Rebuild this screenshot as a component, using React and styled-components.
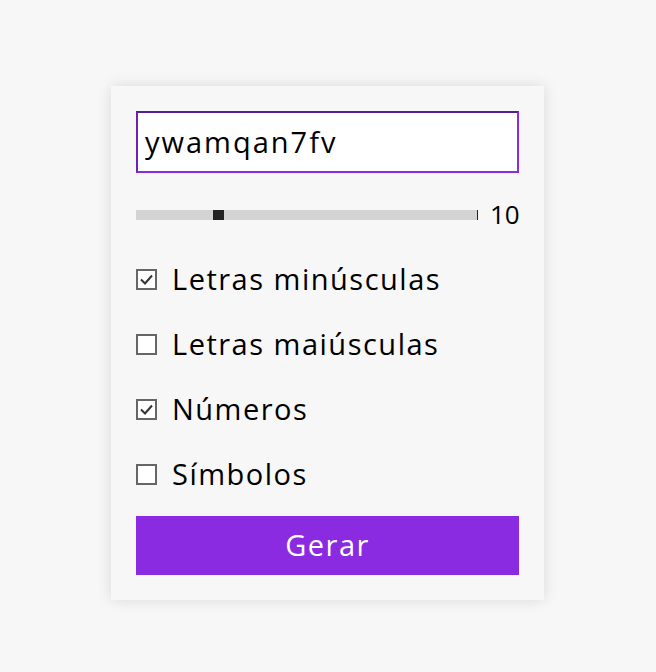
import React, { useState } from "react";
import styled, { createGlobalStyle } from "styled-components";

const Global = createGlobalStyle`
  html, body { margin: 0; padding: 0; background: #f7f7f7; }
  body { font-family: "Open Sans", "Noto Sans", sans-serif; }
  * { box-sizing: border-box; }
`;

const Page = styled.div`
  width: 656px;
  height: 672px;
  display: flex;
  padding-top: 86px;
  padding-left: 111px;
`;

const Card = styled.div`
  width: 433px;
  height: 514px;
  background: #f7f7f7;
  box-shadow: 0 0 14px rgba(0, 0, 0, 0.12);
  padding: 25px;
  display: flex;
  flex-direction: column;
`;

const Output = styled.div`
  height: 62px;
  background: #fff;
  border: 2px solid #8a2be2;
  border-top-color: #561c9a;
  border-left-color: #6a22b8;
  display: flex;
  align-items: center;
  padding-left: 7px;
  font-size: 29px;
  letter-spacing: 2px;
  color: #000;
  padding-bottom: 2px;
`;

const SliderRow = styled.div`
  display: flex;
  align-items: center;
  margin-top: 24px;
  height: 36px;
`;

const Track = styled.div`
  position: relative;
  flex-shrink: 0;
  width: 341px;
  height: 10px;
  background: #d3d3d3;
`;

const Thumb = styled.div`
  position: absolute;
  top: 0;
  width: 11px;
  height: 10px;
  background: #222;
`;

const EndTick = styled.div`
  flex-shrink: 0;
  width: 1px;
  height: 10px;
  background: #222;
`;

const Value = styled.span`
  margin-left: 12px;
  font-size: 26px;
  color: #000;
  line-height: 1;
  padding-bottom: 2px;
  white-space: nowrap;
`;

const Options = styled.div`
  display: flex;
  flex-direction: column;
  margin-top: 14px;
`;

const Option = styled.label`
  display: flex;
  align-items: center;
  height: 65px;
  cursor: pointer;
`;

const Box = styled.span`
  width: 21px;
  height: 21px;
  border: 2px solid #666;
  background: #fff;
  display: flex;
  align-items: center;
  justify-content: center;
  flex-shrink: 0;
`;

const Label = styled.span`
  margin-left: 15px;
  font-size: 29px;
  letter-spacing: 1.5px;
  color: #000;
  padding-bottom: 2px;
`;

const Button = styled.button`
  margin-top: 9px;
  height: 59px;
  border: none;
  background: #8a2be2;
  color: #fff;
  font-family: inherit;
  font-size: 29px;
  letter-spacing: 1.5px;
  cursor: pointer;
  padding-bottom: 3px;
`;

const Check = () => (
  <svg width="15" height="15" viewBox="0 0 15 15">
    <path d="M2 7.5 L6 11.5 L13 3.5" fill="none" stroke="#333" strokeWidth="2" />
  </svg>
);

const opts = [
  { label: "Letras minúsculas", on: true },
  { label: "Letras maiúsculas", on: false },
  { label: "Números", on: true },
  { label: "Símbolos", on: false },
];

export default function App() {
  const [state, setState] = useState(opts);
  return (
    <>
      <Global />
      <Page>
        <Card>
          <Output>ywamqan7fv</Output>
          <SliderRow>
            <Track>
              <Thumb style={{ left: 77 }} />
            </Track>
            <EndTick />
            <Value>10</Value>
          </SliderRow>
          <Options>
            {state.map((o, i) => (
              <Option
                key={o.label}
                onClick={() =>
                  setState((s) => s.map((x, j) => (j === i ? { ...x, on: !x.on } : x)))
                }
              >
                <Box>{o.on && <Check />}</Box>
                <Label>{o.label}</Label>
              </Option>
            ))}
          </Options>
          <Button>Gerar</Button>
        </Card>
      </Page>
    </>
  );
}
